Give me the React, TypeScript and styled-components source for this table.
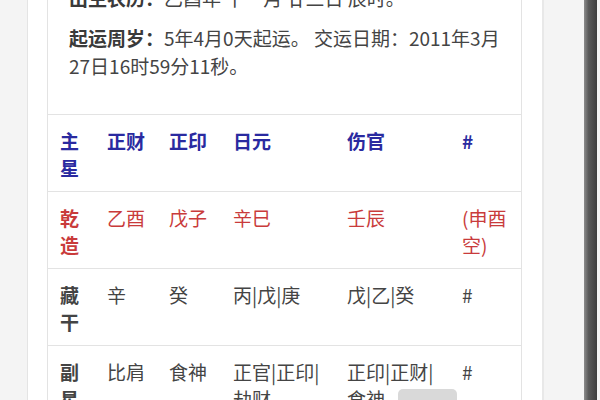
import React from "react";
import styled, { createGlobalStyle } from "styled-components";

const GlobalStyle = createGlobalStyle`
  html, body {
    margin: 0;
    padding: 0;
    background: #f4f4f4;
    overflow: hidden;
  }
  body {
    font-family: "Noto Sans CJK SC", "Noto Sans", sans-serif;
  }
`;

const Frame = styled.div`
  display: flex;
  height: 400px;
  width: 600px;
  overflow: hidden;
`;

const Gutter = styled.div<{ $w: number }>`
  flex: 0 0 ${(p) => p.$w}px;
  background: #f4f4f4;
`;

const Edge = styled.div`
  flex: 0 0 13px;
  background: linear-gradient(to right, #8c8c8c 0%, #5a5a5a 35%, #3e3e3e 100%);
`;

const Page = styled.div`
  flex: 0 0 517px;
  box-sizing: border-box;
  background: #fff;
  border-left: 1px solid #e4e4e4;
  border-right: 2px solid #e8e8e8;
  padding-left: 19px;
  position: relative;
`;

const Card = styled.div`
  width: 475px;
  box-sizing: border-box;
  margin-top: -16px;
  border: 1px solid #e3e3e3;
  border-top: none;
  background: #fff;
`;

const Info = styled.div`
  padding: 0 20px 34px 21px;
  color: #444;
`;

const Para = styled.p`
  margin: 0 0 12px;
  font-size: 19px;
  line-height: 28px;
  &:last-child {
    margin-bottom: 0;
  }
`;

const Label = styled.span`
  font-weight: 700;
  color: #3a3a3a;
`;

const Table = styled.table`
  width: 100%;
  border-collapse: collapse;
  table-layout: fixed;
`;

type Tone = "head" | "red" | "plain";

const toneColor: Record<Tone, string> = {
  head: "#2a2aa0",
  red: "#c93b3b",
  plain: "#444",
};

const Row = styled.tr`
  border-top: 1px solid #e3e3e3;
`;

const Cell = styled.td<{ $tone: Tone; $bold?: boolean }>`
  padding: 12px 12px 10px 12px;
  vertical-align: top;
  font-size: 19px;
  line-height: 27px;
  color: ${(p) => toneColor[p.$tone]};
  font-weight: ${(p) => (p.$bold ? 700 : 400)};
  word-break: break-all;
`;

const Overlay = styled.div`
  position: absolute;
  left: 370px;
  top: 389px;
  width: 59px;
  height: 30px;
  border-radius: 5px;
  background: #d9d9d9;
`;

const widths = [47, 62, 64, 114, 115, 71];

const rows: { tone: Tone; allBold: boolean; cells: string[] }[] = [
  { tone: "head", allBold: true, cells: ["主星", "正财", "正印", "日元", "伤官", "#"] },
  { tone: "red", allBold: false, cells: ["乾造", "乙酉", "戊子", "辛巳", "壬辰", "(申酉空)"] },
  { tone: "plain", allBold: false, cells: ["藏干", "辛", "癸", "丙|戊|庚", "戊|乙|癸", "#"] },
  { tone: "plain", allBold: false, cells: ["副星", "比肩", "食神", "正官|正印|劫财", "正印|正财|食神", "#"] },
  { tone: "plain", allBold: false, cells: ["星运", "长生", "胎", "死", "墓", "#"] },
];

export default function App() {
  return (
    <>
      <GlobalStyle />
      <Frame>
        <Gutter $w={27} />
        <Page>
          <Card>
            <Info>
              <Para>
                <Label>出生农历：</Label>乙酉年 十一月 廿三日 辰时。
              </Para>
              <Para>
                <Label>起运周岁：</Label>5年4月0天起运。 交运日期：2011年3月27日16时59分11秒。
              </Para>
            </Info>
            <Table>
              <colgroup>
                {widths.map((w, i) => (
                  <col key={i} style={{ width: w }} />
                ))}
              </colgroup>
              <tbody>
                {rows.map((r, ri) => (
                  <Row key={ri}>
                    {r.cells.map((c, ci) => (
                      <Cell key={ci} $tone={r.tone} $bold={r.allBold || ci === 0}>
                        {c}
                      </Cell>
                    ))}
                  </Row>
                ))}
              </tbody>
            </Table>
          </Card>
          <Overlay />
        </Page>
        <Gutter $w={40} />
        <Edge />
      </Frame>
    </>
  );
}
